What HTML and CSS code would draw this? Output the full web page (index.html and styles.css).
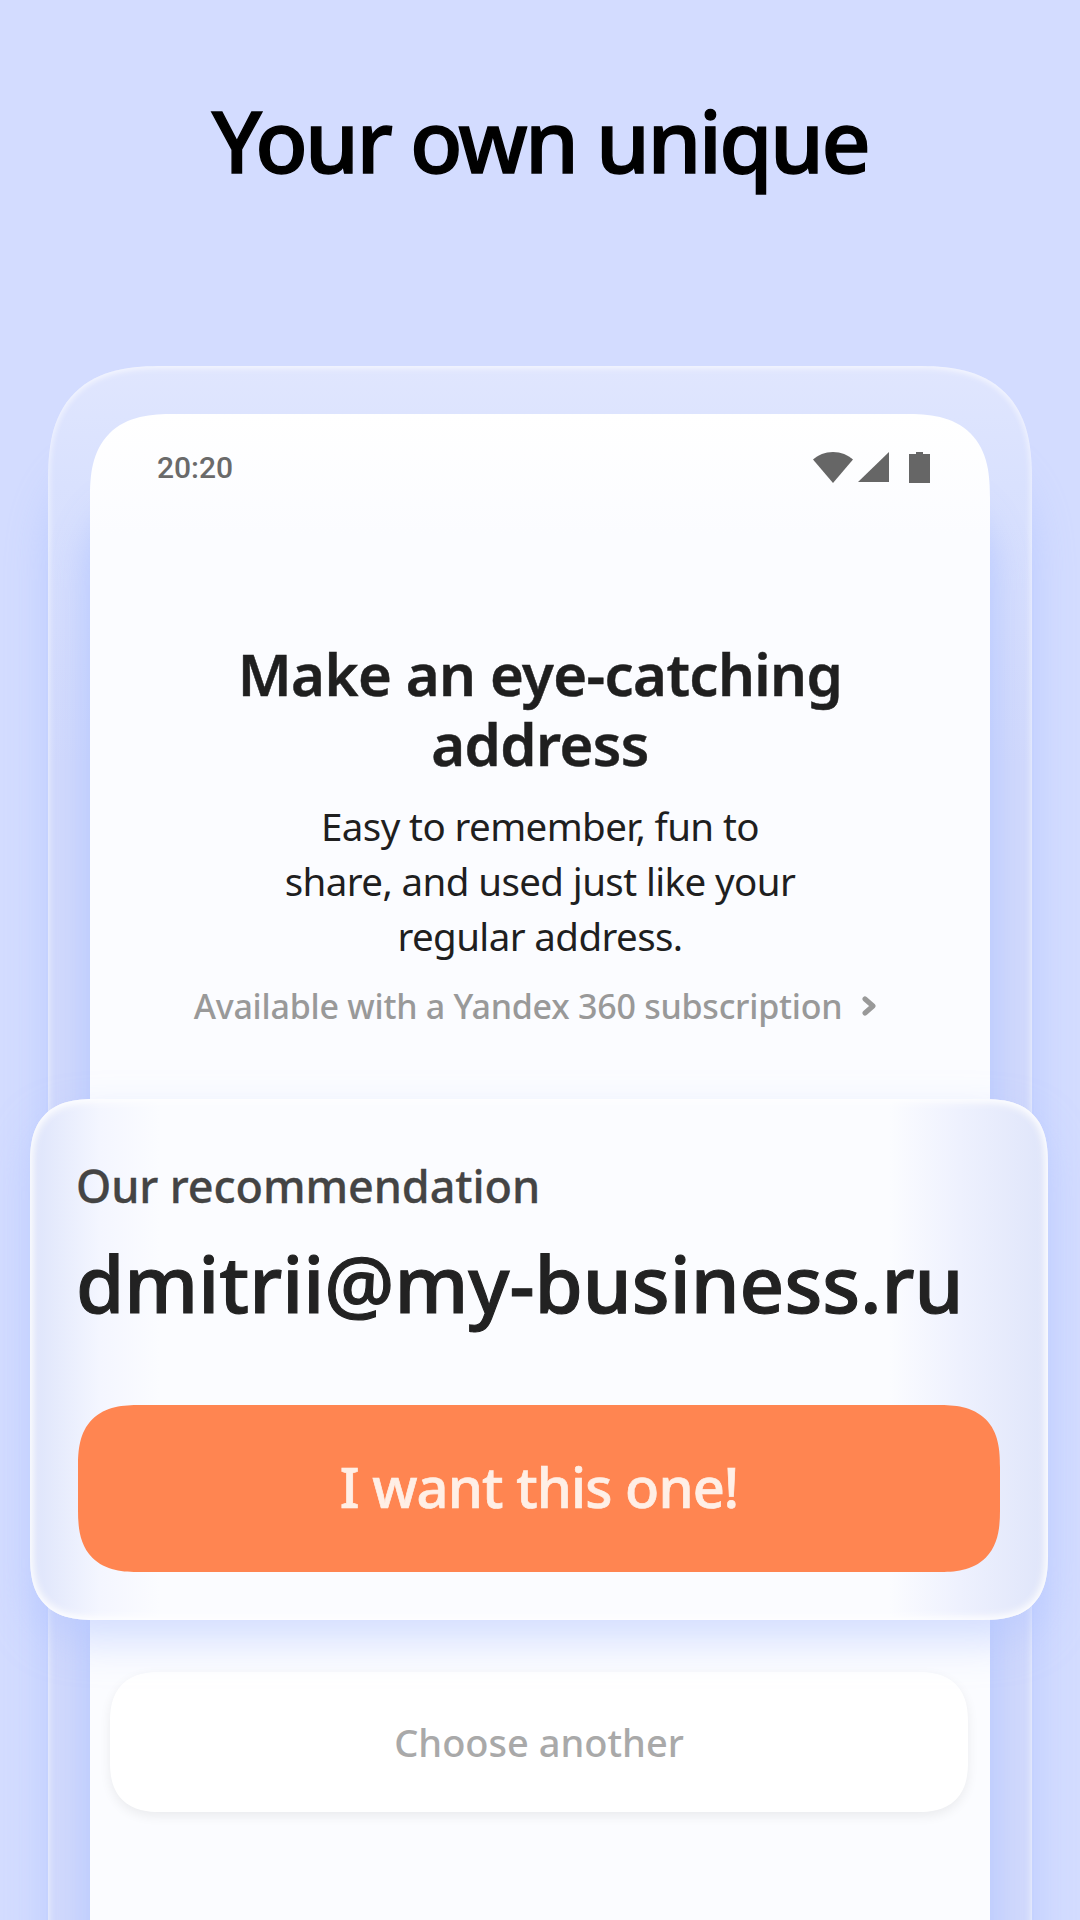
FILE: index.html
```html
<!DOCTYPE html>
<html lang="en">
<head>
<meta charset="utf-8">
<title>Your own unique</title>
<link rel="stylesheet" href="styles.css">
</head>
<body>
<main class="page">
  <h1 class="title">Your own unique</h1>
  <section class="device">
    <div class="screen">
      <div class="status">
        <span class="time">20:20</span>
        <div class="status-icons">
          <svg class="ic-wifi" viewBox="0 0 40 31"><path d="M0 7.5C5 3 12 0 20 0s15 3 20 7.5L20 31z"/></svg>
          <svg class="ic-signal" viewBox="0 0 31 30"><path d="M31 0v30H0z"/></svg>
          <svg class="ic-battery" viewBox="0 0 21 31"><path d="M7 0h7v2h7v29H0V2h7z"/></svg>
        </div>
      </div>
      <div class="intro">
        <h2 class="heading">Make an eye-catching address</h2>
        <p class="lead">Easy to remember, fun to<br>share, and used just like your<br>regular address.</p>
        <a class="sub">Available with a Yandex 360 subscription
          <svg class="chev" viewBox="0 0 14 20"><path d="M3 3l8 7-8 7"/></svg>
        </a>
      </div>
      <button class="secondary">Choose another</button>
    </div>
  </section>
  <section class="card">
    <div class="card-label">Our recommendation</div>
    <div class="card-address">dmitrii@my-business.ru</div>
    <button class="primary">I want this one!</button>
  </section>
</main>
</body>
</html>
```
FILE: styles.css
```css
* { box-sizing: border-box; }
html, body { margin: 0; padding: 0; }
body { font-family: "Noto Sans", "Open Sans", sans-serif; }
.page {
  position: relative;
  width: 1080px;
  height: 1920px;
  overflow: hidden;
  background: #d3dcff;
}
.title {
  margin: 0;
  height: 366px;
  padding-top: 85px;
  text-align: center;
  font-size: 86px;
  line-height: 110px;
  font-weight: 500;
  -webkit-text-stroke: 1.4px #000;
  color: #000;
  letter-spacing: -2.6px;
}
.device {
  margin: 0 48px;
  height: 1600px;
  padding: 48px 42px 0;
  border-radius: 116px 116px 0 0;
  corner-shape: superellipse(1.4);
  background: linear-gradient(180deg, #e0e6fe 0, #d9e1fe 120px, #d1d9fc 400px);
  box-shadow: 0 90px 40px rgba(178, 196, 255, .75), inset 0 3px 6px rgba(255, 255, 255, .5), inset 3px 0 6px rgba(255, 255, 255, .25), inset -3px 0 6px rgba(255, 255, 255, .25);
}
.screen {
  height: 1560px;
  padding: 0 20px;
  border-radius: 84px 84px 0 0;
  corner-shape: superellipse(1.4);
  background: linear-gradient(180deg, #fff 0, #fbfcff 120px);
  box-shadow: 0 90px 36px 4px rgba(178, 196, 255, .85);
  display: flex;
  flex-direction: column;
}
.status {
  display: flex;
  justify-content: space-between;
  align-items: center;
  height: 106px;
  padding: 0 40px 0 47px;
}
.time {
  font-family: Roboto, sans-serif;
  font-weight: 500;
  font-size: 30px;
  color: #6a6a6a;
}
.status-icons { display: flex; align-items: center; gap: 5px; }
.status-icons svg { display: block; fill: #666; height: 31px; }
.ic-wifi { width: 40px; }
.ic-signal { width: 31px; height: 30px !important; }
.ic-battery { width: 21px; margin-left: 15px; }
.intro { text-align: center; padding-top: 119px; height: 652px; }
.heading {
  margin: 0 auto;
  width: 700px;
  font-size: 58px;
  line-height: 70px;
  font-weight: 600;
  -webkit-text-stroke: .5px #1f1f1f;
  letter-spacing: -.6px;
  color: #1f1f1f;
}
.lead {
  margin: 20px 0 0;
  font-size: 38.5px;
  line-height: 55px;
  letter-spacing: -.6px;
  color: #1f1f1f;
}
.sub {
  display: flex;
  justify-content: center;
  align-items: center;
  gap: 20px;
  margin-top: 19px;
  padding-right: 10px;
  font-size: 34px;
  line-height: 46px;
  font-weight: 500;
  letter-spacing: -.25px;
  color: #999;
}
.chev { width: 14px; height: 20px; fill: none; stroke: #999; stroke-width: 5; stroke-linecap: round; stroke-linejoin: round; }
.secondary {
  display: block;
  width: 858px;
  height: 140px;
  margin: 500px 0 0;
  border: 0;
  border-radius: 50px;
  corner-shape: superellipse(1.3);
  background: #fff;
  box-shadow: 0 4px 12px rgba(0, 0, 0, .07);
  font: 500 38px "Noto Sans", sans-serif;
  color: #a9a9a9;
}
.card {
  position: absolute;
  left: 30px;
  top: 1099px;
  width: 1018px;
  height: 521px;
  padding: 57px 48px 48px 46px;
  border-radius: 66px;
  corner-shape: superellipse(1.4);
  background: linear-gradient(90deg, #dde4fb 0, #f4f6ff 70px, #fbfcff 130px, #fbfcff 860px, #eef1fe 930px, #dfe5fa 1018px);
  box-shadow: 0 20px 40px rgba(178, 196, 255, .55), inset 0 4px 8px rgba(255, 255, 255, .7), inset 0 -4px 8px rgba(255, 255, 255, .7), inset 4px 0 8px rgba(255, 255, 255, .5), inset -4px 0 8px rgba(255, 255, 255, .5);
}
.card-label {
  font-size: 45px;
  line-height: 60px;
  font-weight: 500;
  -webkit-text-stroke: .3px #444;
  letter-spacing: -.1px;
  color: #444;
}
.card-address {
  margin-top: 17px;
  font-size: 78px;
  line-height: 100px;
  font-weight: 500;
  -webkit-text-stroke: 1.1px #222;
  color: #222;
  white-space: nowrap;
}
.primary {
  display: block;
  width: 922px;
  height: 167px;
  margin: 72px 0 0 2px;
  padding: 0 0 6px;
  border: 0;
  border-radius: 62px;
  corner-shape: superellipse(1.4);
  background: #ff8551;
  font: 500 56px "Noto Sans", sans-serif;
  -webkit-text-stroke: .7px #ffefe6;
  letter-spacing: -.9px;
  color: #ffefe6;
}
```
